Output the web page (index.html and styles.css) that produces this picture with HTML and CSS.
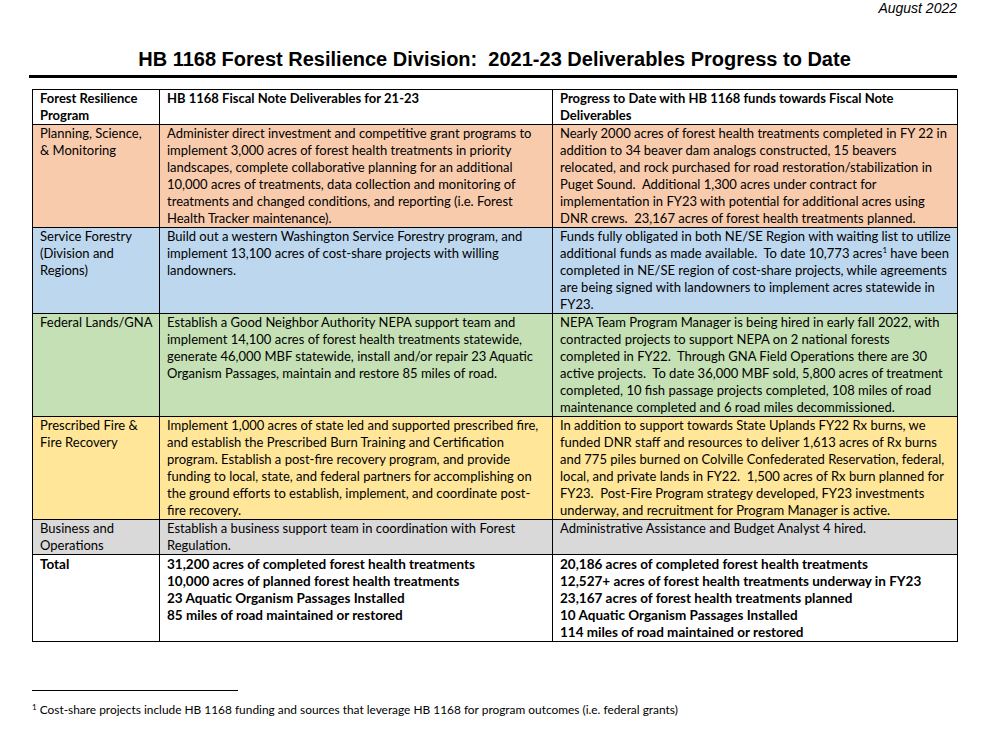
FILE: index.html
```html
<!DOCTYPE html>
<html>
<head>
<meta charset="utf-8">
<link rel="stylesheet" href="styles.css">
</head>
<body>
<div class="page">
  <div class="date">August 2022</div>
  <h1 class="title">HB 1168 Forest Resilience Division:&nbsp; 2021-23 Deliverables Progress to Date</h1>
  <div class="rule"></div>
  <table class="grid">
    <colgroup>
      <col class="c1"><col class="c2"><col class="c3">
    </colgroup>
    <thead>
      <tr class="head">
        <th>Forest Resilience Program</th>
        <th>HB 1168 Fiscal Note Deliverables for 21-23</th>
        <th>Progress to Date with HB 1168 funds towards Fiscal Note Deliverables</th>
      </tr>
    </thead>
    <tbody>
      <tr class="r-salmon">
        <td>Planning, Science,<br>&amp; Monitoring</td>
        <td>Administer direct investment and competitive grant programs to implement 3,000 acres of forest health treatments in priority landscapes, complete collaborative planning for an additional 10,000 acres of treatments, data collection and monitoring of treatments and changed conditions, and reporting (i.e. Forest Health Tracker maintenance).</td>
        <td>Nearly 2000 acres of forest health treatments completed in FY 22 in addition to 34 beaver dam analogs constructed, 15 beavers relocated, and rock purchased for road restoration/stabilization in Puget Sound.&nbsp; Additional 1,300 acres under contract for implementation in FY23 with potential for additional acres using DNR crews.&nbsp; 23,167 acres of forest health treatments planned.</td>
      </tr>
      <tr class="r-blue">
        <td>Service Forestry (Division and Regions)</td>
        <td>Build out a western Washington Service Forestry program, and implement 13,100 acres of cost-share projects with willing landowners.</td>
        <td>Funds fully obligated in both NE/SE Region with waiting list to utilize additional funds as made available.&nbsp; To date 10,773 acres<sup>1</sup> have been completed in NE/SE region of cost-share projects, while agreements are being signed with landowners to implement acres statewide in FY23.</td>
      </tr>
      <tr class="r-green">
        <td>Federal Lands/GNA</td>
        <td>Establish a Good Neighbor Authority NEPA support team and implement 14,100 acres of forest health treatments statewide, generate 46,000 MBF statewide, install and/or repair 23 Aquatic Organism Passages, maintain and restore 85 miles of road.</td>
        <td>NEPA Team Program Manager is being hired in early fall 2022, with contracted projects to support NEPA on 2 national forests completed in FY22.&nbsp; Through GNA Field Operations there are 30 active projects.&nbsp; To date 36,000 MBF sold, 5,800 acres of treatment completed, 10 fish passage projects completed, 108 miles of road maintenance completed and 6 road miles decommissioned.</td>
      </tr>
      <tr class="r-yellow">
        <td>Prescribed Fire &amp; Fire Recovery</td>
        <td>Implement 1,000 acres of state led and supported prescribed fire, and establish the Prescribed Burn Training and Certification program. Establish a post-fire recovery program, and provide funding to local, state, and federal partners for accomplishing on the ground efforts to establish, implement, and coordinate post-fire recovery.</td>
        <td>In addition to support towards State Uplands FY22 Rx burns, we funded DNR staff and resources to deliver 1,613 acres of Rx burns and 775 piles burned on Colville Confederated Reservation, federal, local, and private lands in FY22.&nbsp; 1,500 acres of Rx burn planned for FY23.&nbsp; Post-Fire Program strategy developed, FY23 investments underway, and recruitment for Program Manager is active.</td>
      </tr>
      <tr class="r-grey">
        <td>Business and Operations</td>
        <td>Establish a business support team in coordination with Forest Regulation.</td>
        <td>Administrative Assistance and Budget Analyst 4 hired.</td>
      </tr>
      <tr class="total">
        <td>Total</td>
        <td>31,200 acres of completed forest health treatments<br>10,000 acres of planned forest health treatments<br>23 Aquatic Organism Passages Installed<br>85 miles of road maintained or restored</td>
        <td>20,186 acres of completed forest health treatments<br>12,527+ acres of forest health treatments underway in FY23<br>23,167 acres of forest health treatments planned<br>10 Aquatic Organism Passages Installed<br>114 miles of road maintained or restored</td>
      </tr>
    </tbody>
  </table>
  <div class="footnotes">
    <div class="fn-rule"></div>
    <p class="fn"><sup>1</sup> Cost-share projects include HB 1168 funding and sources that leverage HB 1168 for program outcomes (i.e. federal grants)</p>
  </div>
</div>
</body>
</html>
```
FILE: styles.css
```css
html, body {
  margin: 0;
  padding: 0;
  background: #ffffff;
  color: #000000;
}
.page {
  width: 1002px;
  height: 734px;
  padding: 0 45px 0 32px;
  box-sizing: border-box;
  font-family: Lato, "Liberation Sans", sans-serif;
}
.date {
  text-align: right;
  font-family: "Liberation Sans Narrow", "Liberation Sans", sans-serif;
  font-style: italic;
  font-size: 14px;
  line-height: 16px;
}
.title {
  margin: 32px 0 0 0;
  text-align: center;
  font-family: "Liberation Sans Narrow", "Liberation Sans", sans-serif;
  font-weight: bold;
  font-size: 20px;
  line-height: 22px;
}
.rule {
  margin: 5px 0 0 -3px;
  height: 3px;
  background: #000;
}
.grid {
  margin-top: 11px;
  width: 925px;
  border-collapse: collapse;
  table-layout: fixed;
  font-size: 13px;
  line-height: 17px;
}
.c1 { width: 127px; }
.c2 { width: 393px; }
.c3 { width: 405px; }
.grid th, .grid td {
  border: 1px solid #000;
  padding: 0 6px 0 7px;
  vertical-align: top;
  text-align: left;
}
.grid th {
  font-weight: bold;
}
.grid sup {
  font-size: 8px;
  line-height: 0;
  vertical-align: 5px;
}
.r-salmon td { background: #f8cbad; }
.r-blue td { background: #bdd7ee; }
.r-green td { background: #c5e0b4; }
.r-yellow td { background: #ffe699; }
.r-grey td { background: #d9d9d9; }
.total td {
  font-weight: bold;
  font-size: 13.5px;
  padding-top: 1px;
}
.footnotes {
  margin-top: 48px;
}
.fn-rule {
  width: 206px;
  height: 1px;
  background: #000;
}
.fn {
  margin: 12px 0 0 0;
  font-size: 11.9px;
  line-height: 14px;
}
.fn sup {
  font-size: 8px;
  line-height: 0;
  vertical-align: 4px;
}
```
